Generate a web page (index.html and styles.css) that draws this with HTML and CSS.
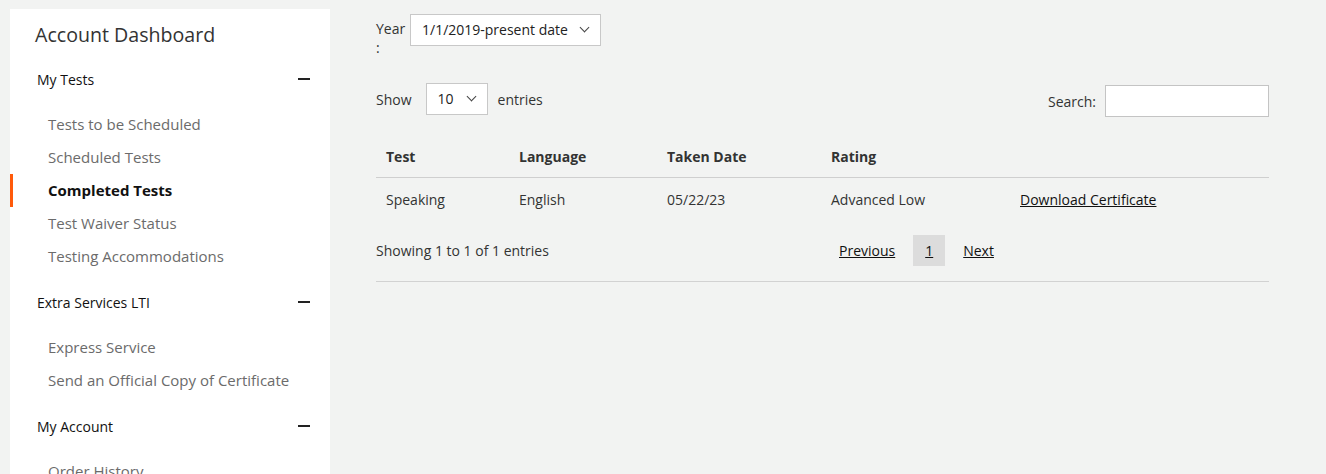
FILE: index.html
```html
<!DOCTYPE html>
<html lang="en">
<head>
  <meta charset="UTF-8">
  <title>Account Dashboard - Completed Tests</title>
  <link rel="stylesheet" href="styles.css">
</head>
<body>
  <div class="page">
    <!-- Sidebar -->
    <aside class="sidebar">
      <h2 class="sidebar-title">Account Dashboard</h2>

      <div class="nav-group">
        <div class="nav-head"><span>My Tests</span><span class="minus"></span></div>
        <ul class="nav-list">
          <li><a href="#">Tests to be Scheduled</a></li>
          <li><a href="#">Scheduled Tests</a></li>
          <li class="active"><a href="#">Completed Tests</a></li>
          <li><a href="#">Test Waiver Status</a></li>
          <li><a href="#">Testing Accommodations</a></li>
        </ul>
      </div>

      <div class="nav-group">
        <div class="nav-head"><span>Extra Services LTI</span><span class="minus"></span></div>
        <ul class="nav-list">
          <li><a href="#">Express Service</a></li>
          <li><a href="#">Send an Official Copy of Certificate</a></li>
        </ul>
      </div>

      <div class="nav-group">
        <div class="nav-head"><span>My Account</span><span class="minus"></span></div>
        <ul class="nav-list">
          <li><a href="#">Order History</a></li>
        </ul>
      </div>
    </aside>

    <!-- Main content -->
    <main class="content">
      <div class="year-row">
        <label class="year-label">Year :</label>
        <div class="select year-select">1/1/2019-present date <span class="chev"></span></div>
      </div>

      <div class="table-tools">
        <div class="show">
          Show
          <div class="select len-select">10 <span class="chev"></span></div>
          entries
        </div>
        <div class="search">
          Search:
          <input type="text" class="search-input">
        </div>
      </div>

      <table class="results">
        <thead>
          <tr>
            <th class="c-test">Test</th>
            <th class="c-lang">Language</th>
            <th class="c-date">Taken Date</th>
            <th class="c-rating">Rating</th>
            <th></th>
          </tr>
        </thead>
        <tbody>
          <tr>
            <td>Speaking</td>
            <td>English</td>
            <td>05/22/23</td>
            <td>Advanced Low</td>
            <td><a href="#">Download Certificate</a></td>
          </tr>
        </tbody>
      </table>

      <div class="table-foot">
        <div class="info">Showing 1 to 1 of 1 entries</div>
        <div class="paging">
          <a href="#">Previous</a>
          <a href="#" class="current">1</a>
          <a href="#">Next</a>
        </div>
      </div>
    </main>
  </div>
</body>
</html>
```

FILE: styles.css
```css
body {
  margin: 0;
  background: #f2f3f2;
  font-family: "Open Sans", "Liberation Sans", sans-serif;
  color: #333;
  overflow: hidden;
}

.page {
  display: flex;
  align-items: flex-start;
  padding: 9px 0 0 10px;
}

/* Sidebar */
.sidebar {
  width: 320px;
  height: 465px;
  overflow: hidden;
  background: #fff;
  flex-shrink: 0;
}
.sidebar-title {
  margin: 0 0 11px;
  padding: 13px 0 0 25px;
  font-size: 19.6px;
  font-weight: 400;
  color: #333;
  line-height: 26px;
}
.nav-head {
  display: flex;
  justify-content: space-between;
  align-items: center;
  padding: 0 20px 0 27px;
  height: 40px;
  font-size: 14px;
  font-weight: 500;
  color: #111;
}
.minus {
  width: 12px;
  height: 2px;
  background: #222;
}
.nav-list {
  list-style: none;
  margin: 0;
  padding: 9px 0 9px;
}
.nav-list li {
  height: 33px;
  line-height: 33px;
  padding-left: 38px;
  font-size: 15px;
}
.nav-list a {
  color: #6b6b6b;
  text-decoration: none;
}
.nav-list li.active {
  box-shadow: inset 3px 0 0 #ff5a0a;
}
.nav-list li.active a {
  color: #111;
  font-weight: 700;
}

/* Main */
.content {
  margin-left: 46px;
  width: 893px;
  font-size: 14px;
}
.year-row {
  display: flex;
  align-items: flex-start;
  padding-top: 5px;
}
.year-label {
  width: 30px;
  line-height: 19px;
  margin-top: 5px;
  font-size: 14px;
}
.select {
  position: relative;
  background: #fff;
  border: 1px solid #c8c8c8;
  box-sizing: border-box;
  font-size: 14px;
  line-height: 29px;
  color: #222;
}
.chev {
  position: absolute;
  top: 9px;
  width: 6px;
  height: 6px;
  border-right: 1.5px solid #444;
  border-bottom: 1.5px solid #444;
  transform: rotate(45deg);
}
.year-select {
  width: 191px;
  height: 32px;
  padding-left: 11px;
  margin-left: 4px;
}
.year-select .chev {
  right: 12px;
}
.table-tools {
  display: flex;
  justify-content: space-between;
  align-items: flex-start;
  margin-top: 26px;
}
.show {
  display: flex;
  align-items: center;
  gap: 10px;
}
.len-select {
  width: 62px;
  height: 32px;
  padding-left: 11px;
  margin-left: 4px;
}
.len-select .chev {
  right: 12px;
}
.search {
  display: flex;
  align-items: center;
  gap: 9px;
  margin-top: 2px;
}
.search-input {
  width: 164px;
  height: 32px;
  box-sizing: border-box;
  border: 1px solid #c4c4c4;
  background: #fff;
  margin: 0;
}

.results {
  width: 100%;
  border-collapse: collapse;
  margin-top: 18px;
}
.results th {
  text-align: left;
  font-weight: 700;
  height: 42px;
  padding: 0 10px;
  border-bottom: 1px solid #cfcfcf;
  color: #333;
}
.results td {
  height: 42px;
  padding: 0 10px;
  color: #333;
}
.c-test { width: 113px; }
.c-lang { width: 128px; }
.c-date { width: 144px; }
.c-rating { width: 169px; }
.results a {
  color: #111;
}
.table-foot {
  display: flex;
  align-items: center;
  height: 61px;
  border-bottom: 1px solid #d2d2d2;
}
.info {
  width: 454px;
}
.paging {
  display: flex;
  align-items: center;
}
.paging a {
  color: #111;
  padding: 0 9px;
  line-height: 31px;
}
.paging a.current {
  background: #dcdcdc;
  width: 32px;
  padding: 0;
  text-align: center;
  margin: 0 9px;
}
```
